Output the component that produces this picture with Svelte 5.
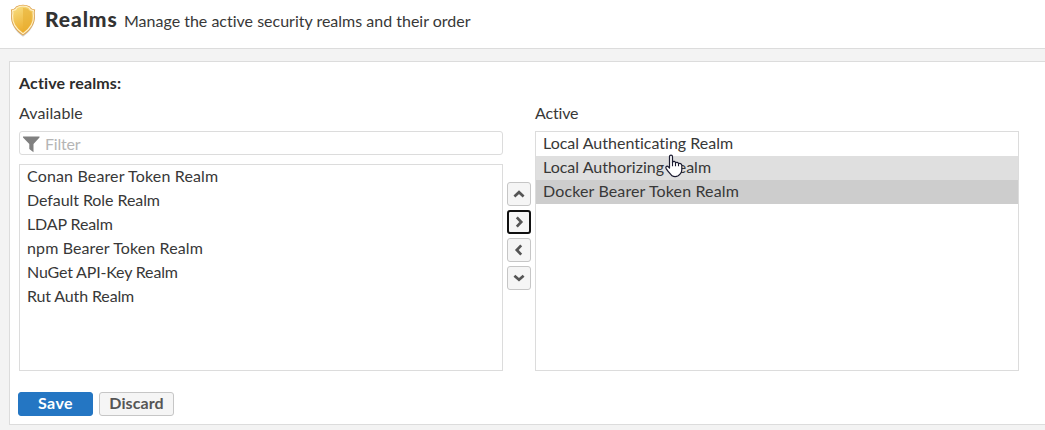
<script>
  const available = [
    { name: 'Conan Bearer Token Realm', track: 0.15 },
    { name: 'Default Role Realm', track: -0.07 },
    { name: 'LDAP Realm', track: -0.12 },
    { name: 'npm Bearer Token Realm', track: 0.12 },
    { name: 'NuGet API-Key Realm', track: -0.17 },
    { name: 'Rut Auth Realm', track: -0.14 }
  ];
  const active = [
    { name: 'Local Authenticating Realm', state: '', track: 0.01 },
    { name: 'Local Authorizing Realm', state: 'hover', track: 0.01 },
    { name: 'Docker Bearer Token Realm', state: 'selected', track: 0.13 }
  ];
  const moves = [
    { label: 'Move up', d: 'M7.4 14.4 12 10.2l4.6 4.2' },
    { label: 'Add', d: 'M9.8 7.4 14.2 12 9.8 16.6', focus: true },
    { label: 'Remove', d: 'M14.2 7.4 9.8 12 14.2 16.6' },
    { label: 'Move down', d: 'M7.4 9.7 12 13.8l4.6-4.1' }
  ];
</script>

<div class="page">
  <header>
    <svg class="shield" width="26" height="34" viewBox="0 0 26 34">
      <defs>
        <linearGradient id="gold" x1="0" y1="0" x2="0.3" y2="1">
          <stop offset="0" stop-color="#f8df83" />
          <stop offset="1" stop-color="#ecac2b" />
        </linearGradient>
      </defs>
      <path d="M1.3 7L5 4L13 2L21 4L24.7 7V11C26 20 20 28 13 32.8C6 28 0 20 1.3 11Z" fill="#999" opacity=".45" />
      <path d="M.8 5.4Q4.8 5.2 6 2.4Q9 .8 13 .8Q17 .8 20 2.4Q21.2 5.2 25.2 5.4Q24 8 24.8 12C25.4 20 20 27 13 31.4C6 27 .6 20 1.2 12Q2 8 .8 5.4Z" fill="#dfa145" />
      <path d="M2.6 6.6Q6 6.2 7.1 3.5Q10 2.2 13 2.2Q16 2.2 18.9 3.5Q20 6.2 23.4 6.6Q22.8 9 23.4 12C23.9 19 19 25.6 13 29.7C7 25.6 2.1 19 2.6 12Q3.2 9 2.6 6.6Z" fill="url(#gold)" stroke="#fff0c4" stroke-width="1.2" />
      <path d="M13 4Q16 4 17.8 4.9Q19.2 7.3 21.6 7.9V12C22 18.5 18 24 13 28Z" fill="#e7b136" opacity=".6" />
    </svg>
    <h1>Realms</h1>
    <p>Manage the active security realms and their order</p>
  </header>

  <main>
    <h2>Active realms:</h2>
    <div class="columns">
      <section>
        <h3 class="lab-available">Available</h3>
        <div class="filter">
          <svg width="17" height="17" viewBox="0 0 17 17"><path d="M0 .5h16.5v1L10.5 8v8.2L6.3 13V8L0 1.5Z" fill="#808080" /></svg>
          <span>Filter</span>
        </div>
        <ul class="list left">
          {#each available as realm}
            <li><span style="letter-spacing:{realm.track}px">{realm.name}</span></li>
          {/each}
        </ul>
      </section>
      <div class="moves">
        {#each moves as move}
          <button class:focus={move.focus} aria-label={move.label}>
            <svg width="24" height="24" viewBox="0 0 24 24"><path d={move.d} fill="none" stroke="#555" stroke-width="2.7" /></svg>
          </button>
        {/each}
      </div>
      <section>
        <h3 class="lab-active">Active</h3>
        <ul class="list right">
          {#each active as realm}
            <li class={realm.state}><span style="letter-spacing:{realm.track}px">{realm.name}</span></li>
          {/each}
        </ul>
      </section>
    </div>
    <footer>
      <button class="save">Save</button>
      <button class="discard">Discard</button>
    </footer>
  </main>

  <svg class="cursor" width="19" height="24" viewBox="0 0 19 24">
    <path d="M4.5 2.7C4.5.6 7.5.6 7.5 2.7V8.4C8.2 6.8 10.6 7.3 10.5 9C11.4 7.8 13.5 8.2 13.5 9.8C14.7 8.9 16.8 9.7 16.8 11.3V15.5C16.8 18 15 20.5 13.2 21.8Q10 23.6 7 21.8C5.2 19.8 3.5 18.2 1.3 14.8C0 12.6 2 11.6 3.2 12.7L4.5 14Z" fill="#fff" stroke="#1c1c30" stroke-width="1.2" stroke-linejoin="round" />
    <path d="M7.5 8v4.3M10.5 9v3.3M13.5 10v2.3" stroke="#1c1c30" stroke-width="1.1" />
  </svg>
</div>

<style>
  :global(body) { margin: 0; overflow: hidden; }
  .page {
    position: relative;
    box-sizing: border-box;
    width: 1045px;
    height: 430px;
    overflow: hidden;
    background: #f3f3f3;
    color: #383838;
    font: 16px/24px Lato, sans-serif;
    font-variant-ligatures: none;
  }
  h1, h2, h3, p, ul { margin: 0; padding: 0; }
  button { font-family: inherit; box-sizing: border-box; padding: 0; }
  svg { display: block; }
  header {
    box-sizing: border-box;
    height: 49px;
    display: flex;
    background: #fff;
    border-bottom: 1px solid #dcdcdc;
    white-space: nowrap;
  }
  .shield { margin: 4px 0 0 10px; }
  h1 { margin: 7px 0 0 9px; width: 79px; font-size: 21px; line-height: 24px; font-weight: 900; letter-spacing: .9px; color: #333; }
  header p { margin-top: 9px; }
  main {
    box-sizing: border-box;
    margin: 12px 0 0 9px;
    width: 1050px;
    height: 364px;
    padding: 9px 0 0 9px;
    background: #fff;
    border: 1px solid #dcdcdc;
  }
  h2 { font-size: 16px; line-height: 24px; font-weight: 700; letter-spacing: .15px; color: #2c2c2c; }
  h3 { font-size: 16px; line-height: 24px; font-weight: 400; padding: 6px 0; }
  .lab-available { letter-spacing: .1px; }
  .lab-active { letter-spacing: -.15px; }
  .columns { display: flex; }
  section { width: 484px; }
  .filter {
    box-sizing: border-box;
    height: 24px;
    display: flex;
    align-items: center;
    padding-left: 3px;
    gap: 5px;
    border: 1px solid #dcdcdc;
    border-radius: 3px;
    color: #b5b5b5;
  }
  .filter span { padding-top: 1px; letter-spacing: -.2px; }
  .filter svg { margin-top: 2px; }
  .list {
    box-sizing: border-box;
    list-style: none;
    border: 1px solid #dcdcdc;
    background: #fff;
  }
  .left { height: 207px; margin-top: 9px; }
  .right { height: 240px; }
  li { height: 24px; line-height: 22px; padding-left: 7px; white-space: nowrap; }
  .hover { background: #dfdfdf; }
  .selected { background: #cdcdcd; }
  .moves { width: 24px; margin: 0 4px; padding-top: 87px; display: flex; flex-direction: column; gap: 4px; }
  .moves button {
    width: 24px;
    height: 24px;
    background: #f5f5f5;
    border: 1px solid #c6c6c6;
    border-radius: 3px;
  }
  .moves svg { margin: -1px; }
  .moves .focus { border: 2px solid #101010; }
  .moves .focus svg { margin: -2px; }
  footer { display: flex; gap: 6px; margin: 21px 0 0 -1px; }
  footer button { width: 75px; height: 24px; border-radius: 3px; font-size: 16px; line-height: 20px; padding-bottom: 2px; font-weight: 700; letter-spacing: .1px; }
  .save { background: #2476c3; border: 1px solid #2476c3; color: #fff; letter-spacing: .4px; }
  .discard { background: #f5f5f5; border: 1px solid #c6c6c6; color: #555; }
  .cursor { position: absolute; left: 665px; top: 154px; }
</style>
